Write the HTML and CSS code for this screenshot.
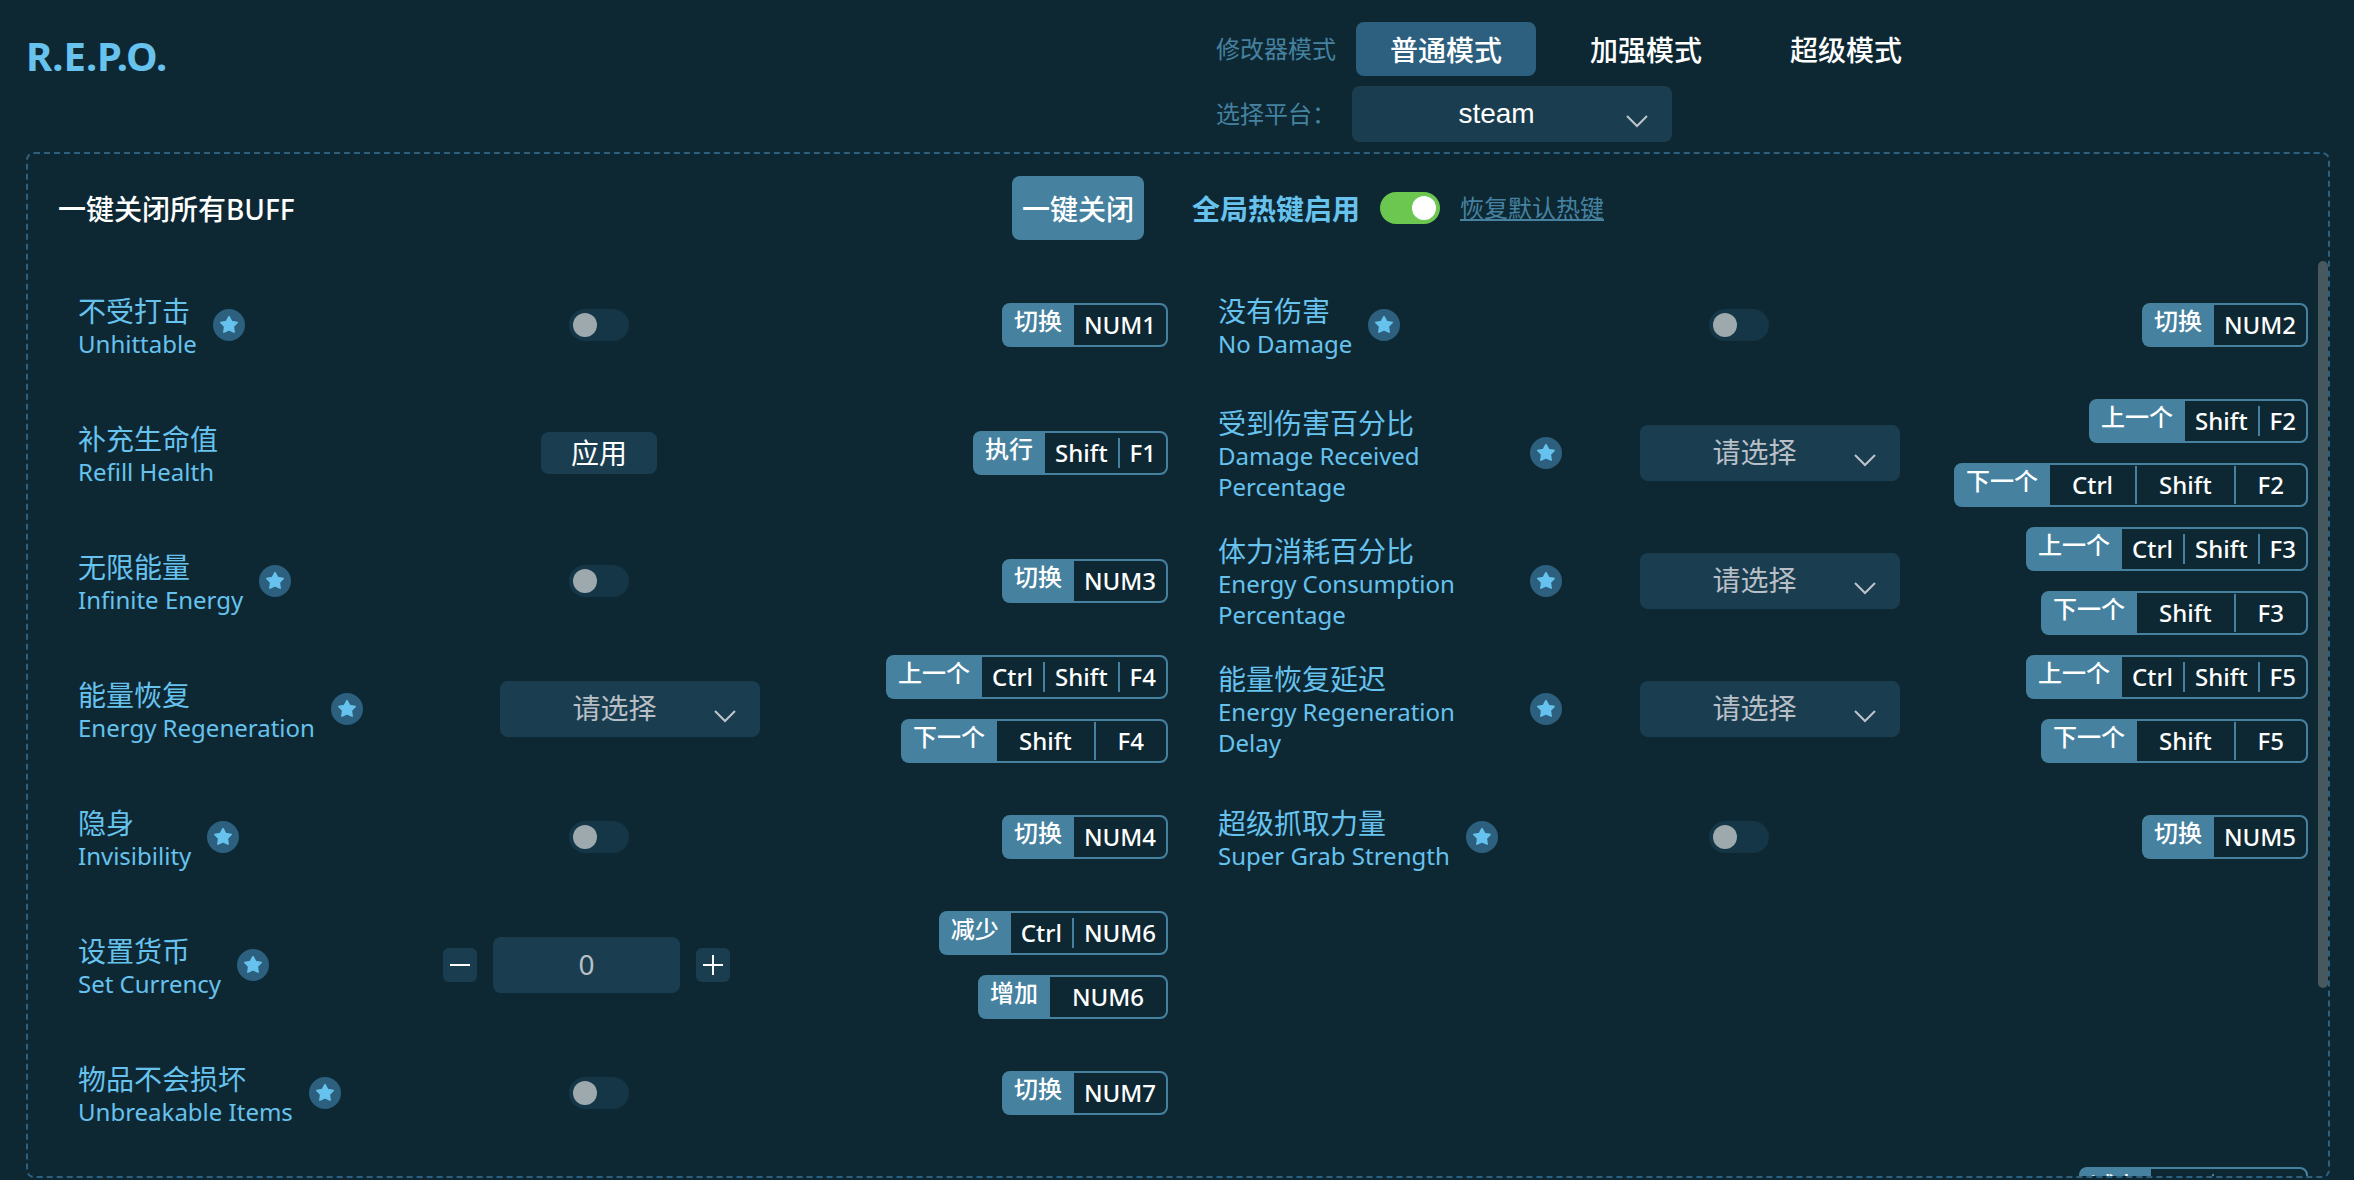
FILE: index.html
```html
<!DOCTYPE html>
<html lang="zh-CN">
<head>
<meta charset="utf-8">
<meta name="viewport" content="width=device-width, initial-scale=1">
<title>R.E.P.O.</title>
<link rel="stylesheet" href="styles.css">
</head>
<body>
<svg class="sprite" aria-hidden="true">
  <symbol id="star" viewBox="0 0 32 32">
    <path d="M16 7.6l2.7 5 5.5.9-3.9 4 .8 5.6-5.1-2.4-5.1 2.4.8-5.6-3.9-4 5.5-.9z" fill="currentColor" stroke="currentColor" stroke-width="1.6" stroke-linejoin="round"/>
  </symbol>
</svg>

<header class="page-header">
  <h1 class="game-title">R.E.P.O.</h1>
  <div class="settings">
    <div class="mode-row">
      <span class="field-label">修改器模式</span>
      <button class="mode mode-active" type="button">普通模式</button>
      <button class="mode" type="button">加强模式</button>
      <button class="mode" type="button">超级模式</button>
    </div>
    <div class="platform-row">
      <label class="field-label" for="platform">选择平台：</label>
      <select class="select select-platform" id="platform"><option>steam</option></select>
    </div>
  </div>
</header>

<main class="panel">
  <div class="toolbar">
    <div class="toolbar-left">
      <span class="toolbar-text">一键关闭所有BUFF</span>
      <button class="close-all" type="button">一键关闭</button>
    </div>
    <div class="toolbar-right">
      <label class="hotkey-label" for="hotkeys">全局热键启用</label>
      <input class="switch" id="hotkeys" type="checkbox" checked>
      <a class="reset-link" href="#">恢复默认热键</a>
    </div>
  </div>

  <div class="scroll-area">
    <div class="options">
      <section class="option">
        <label class="name" for="o1"><span class="text"><span class="zh">不受打击</span><span class="en">Unhittable</span></span><span class="badge"><svg><use href="#star"/></svg></span></label>
        <div class="control"><input class="switch" id="o1" type="checkbox"></div>
        <div class="hotkeys"><div class="hotkey"><span class="action">切换</span><kbd>NUM1</kbd></div></div>
      </section>
      <section class="option">
        <label class="name" for="o2"><span class="text"><span class="zh">没有伤害</span><span class="en">No Damage</span></span><span class="badge"><svg><use href="#star"/></svg></span></label>
        <div class="control"><input class="switch" id="o2" type="checkbox"></div>
        <div class="hotkeys"><div class="hotkey"><span class="action">切换</span><kbd>NUM2</kbd></div></div>
      </section>

      <section class="option">
        <label class="name" for="o3"><span class="text"><span class="zh">补充生命值</span><span class="en">Refill Health</span></span></label>
        <div class="control"><button class="apply" id="o3" type="button">应用</button></div>
        <div class="hotkeys"><div class="hotkey"><span class="action">执行</span><kbd>Shift</kbd><kbd>F1</kbd></div></div>
      </section>
      <section class="option">
        <label class="name" for="o4"><span class="text"><span class="zh">受到伤害百分比</span><span class="en">Damage Received Percentage</span></span><span class="badge"><svg><use href="#star"/></svg></span></label>
        <div class="control control-select"><select class="select" id="o4"><option>请选择</option></select></div>
        <div class="hotkeys">
          <div class="hotkey"><span class="action">上一个</span><kbd>Shift</kbd><kbd>F2</kbd></div>
          <div class="hotkey hotkey-wide"><span class="action">下一个</span><kbd>Ctrl</kbd><kbd>Shift</kbd><kbd>F2</kbd></div>
        </div>
      </section>

      <section class="option">
        <label class="name" for="o5"><span class="text"><span class="zh">无限能量</span><span class="en">Infinite Energy</span></span><span class="badge"><svg><use href="#star"/></svg></span></label>
        <div class="control"><input class="switch" id="o5" type="checkbox"></div>
        <div class="hotkeys"><div class="hotkey"><span class="action">切换</span><kbd>NUM3</kbd></div></div>
      </section>
      <section class="option">
        <label class="name" for="o6"><span class="text"><span class="zh">体力消耗百分比</span><span class="en">Energy Consumption Percentage</span></span><span class="badge"><svg><use href="#star"/></svg></span></label>
        <div class="control control-select"><select class="select" id="o6"><option>请选择</option></select></div>
        <div class="hotkeys">
          <div class="hotkey"><span class="action">上一个</span><kbd>Ctrl</kbd><kbd>Shift</kbd><kbd>F3</kbd></div>
          <div class="hotkey hotkey-wide"><span class="action">下一个</span><kbd>Shift</kbd><kbd>F3</kbd></div>
        </div>
      </section>

      <section class="option">
        <label class="name" for="o7"><span class="text"><span class="zh">能量恢复</span><span class="en">Energy Regeneration</span></span><span class="badge"><svg><use href="#star"/></svg></span></label>
        <div class="control control-select"><select class="select" id="o7"><option>请选择</option></select></div>
        <div class="hotkeys">
          <div class="hotkey"><span class="action">上一个</span><kbd>Ctrl</kbd><kbd>Shift</kbd><kbd>F4</kbd></div>
          <div class="hotkey hotkey-wide"><span class="action">下一个</span><kbd>Shift</kbd><kbd>F4</kbd></div>
        </div>
      </section>
      <section class="option">
        <label class="name" for="o8"><span class="text"><span class="zh">能量恢复延迟</span><span class="en">Energy Regeneration Delay</span></span><span class="badge"><svg><use href="#star"/></svg></span></label>
        <div class="control control-select"><select class="select" id="o8"><option>请选择</option></select></div>
        <div class="hotkeys">
          <div class="hotkey"><span class="action">上一个</span><kbd>Ctrl</kbd><kbd>Shift</kbd><kbd>F5</kbd></div>
          <div class="hotkey hotkey-wide"><span class="action">下一个</span><kbd>Shift</kbd><kbd>F5</kbd></div>
        </div>
      </section>

      <section class="option">
        <label class="name" for="o9"><span class="text"><span class="zh">隐身</span><span class="en">Invisibility</span></span><span class="badge"><svg><use href="#star"/></svg></span></label>
        <div class="control"><input class="switch" id="o9" type="checkbox"></div>
        <div class="hotkeys"><div class="hotkey"><span class="action">切换</span><kbd>NUM4</kbd></div></div>
      </section>
      <section class="option">
        <label class="name" for="o10"><span class="text"><span class="zh">超级抓取力量</span><span class="en">Super Grab Strength</span></span><span class="badge"><svg><use href="#star"/></svg></span></label>
        <div class="control"><input class="switch" id="o10" type="checkbox"></div>
        <div class="hotkeys"><div class="hotkey"><span class="action">切换</span><kbd>NUM5</kbd></div></div>
      </section>

      <section class="option">
        <label class="name" for="o11"><span class="text"><span class="zh">设置货币</span><span class="en">Set Currency</span></span><span class="badge"><svg><use href="#star"/></svg></span></label>
        <div class="control control-stepper">
          <button class="step" type="button" aria-label="减少"><svg viewBox="0 0 34 34"><path d="M7 17h20"/></svg></button>
          <input class="amount" id="o11" type="text" value="0">
          <button class="step" type="button" aria-label="增加"><svg viewBox="0 0 34 34"><path d="M7 17h20M17 7v20"/></svg></button>
        </div>
        <div class="hotkeys">
          <div class="hotkey"><span class="action">减少</span><kbd>Ctrl</kbd><kbd>NUM6</kbd></div>
          <div class="hotkey hotkey-wide"><span class="action">增加</span><kbd>NUM6</kbd></div>
        </div>
      </section>
      <div class="option"></div>

      <section class="option">
        <label class="name" for="o12"><span class="text"><span class="zh">物品不会损坏</span><span class="en">Unbreakable Items</span></span><span class="badge"><svg><use href="#star"/></svg></span></label>
        <div class="control"><input class="switch" id="o12" type="checkbox"></div>
        <div class="hotkeys"><div class="hotkey"><span class="action">切换</span><kbd>NUM7</kbd></div></div>
      </section>
      <div class="option"></div>

      <div class="option"></div>
      <section class="option">
        <div class="name"></div>
        <div class="control"></div>
        <div class="hotkeys">
          <div class="hotkey"><span class="action">减少</span><kbd>Ctrl</kbd><kbd>NUM8</kbd></div>
          <div class="hotkey hotkey-wide"><span class="action">增加</span><kbd>NUM8</kbd></div>
        </div>
      </section>
      <div class="option"></div>
    </div>
    <div class="scroll-thumb"></div>
  </div>
</main>
</body>
</html>
```
FILE: styles.css
```css
:root {
  --bg: #0d2833;
  --field: #1a3e50;
  --active: #2c607e;
  --accent: #4682a0;
  --sky: #67c2ee;
}

* {
  box-sizing: border-box;
}

body {
  margin: 0;
  height: 100vh;
  display: flex;
  flex-direction: column;
  padding: 0 24px 2px 26px;
  background: var(--bg);
  color: #fff;
  font-family: "Noto Sans", "Noto Sans CJK SC", sans-serif;
  font-size: 24px;
}

button,
select,
input {
  margin: 0;
  border: 0;
  font: inherit;
  color: inherit;
}

button {
  padding: 0;
}

.sprite {
  position: absolute;
  width: 0;
  height: 0;
}

/* Header */

.page-header {
  display: grid;
  grid-template-columns: 1fr 1fr;
  padding: 22px 0 10px;
}

.game-title {
  margin: 0;
  font-size: 40px;
  line-height: 68px;
  font-weight: 700;
  color: var(--sky);
}

.settings {
  display: flex;
  flex-direction: column;
  gap: 10px;
  padding-left: 38px;
}

.mode-row,
.platform-row {
  display: flex;
  align-items: center;
  gap: 20px;
}

.platform-row {
  gap: 16px;
}

.field-label {
  width: 120px;
  padding-bottom: 3px;
  white-space: nowrap;
  color: var(--accent);
}

.mode {
  width: 180px;
  height: 54px;
  border-radius: 8px;
  background: none;
  font-size: 28px;
  font-weight: 500;
}

.mode-active {
  background: var(--active);
}

.select {
  width: 260px;
  height: 56px;
  padding: 0 31px 2px 0;
  border-radius: 8px;
  appearance: none;
  background: var(--field) url("data:image/svg+xml,%3Csvg xmlns='http://www.w3.org/2000/svg' width='24' height='16' fill='none' stroke='%23c0c4cc' stroke-width='2'%3E%3Cpath d='M2 2l10 10 10-10'/%3E%3C/svg%3E") no-repeat right 23px top 28px;
  color: #b9bfc6;
  font-size: 28px;
  text-align: center;
  text-align-last: center;
}

.select-platform {
  width: 320px;
  color: #fff;
  font-family: "Liberation Sans", Arial, sans-serif;
}

/* Panel */

.panel {
  flex: 1;
  min-height: 0;
  display: flex;
  flex-direction: column;
  border: 2px dashed var(--active);
  border-radius: 8px;
}

.toolbar {
  display: grid;
  grid-template-columns: 1fr 1fr;
  padding: 22px 0 21px;
}

.toolbar-left,
.toolbar-right {
  display: flex;
  align-items: center;
  font-size: 28px;
}

.toolbar-left {
  justify-content: space-between;
  padding: 0 34px 0 30px;
  font-weight: 500;
}

.toolbar-right {
  gap: 20px;
  padding-left: 14px;
}

.close-all {
  width: 132px;
  height: 64px;
  border-radius: 8px;
  background: var(--accent);
  font-size: 28px;
}

.hotkey-label {
  color: var(--sky);
  font-weight: 700;
}

.reset-link {
  padding-bottom: 3px;
  color: var(--accent);
  font-size: 24px;
}

.switch {
  width: 60px;
  height: 32px;
  padding: 4px;
  border-radius: 16px;
  appearance: none;
  display: flex;
  background: #153647;
}

.switch::before {
  content: "";
  width: 24px;
  height: 24px;
  border-radius: 50%;
  background: #9ea9ae;
}

.switch:checked {
  justify-content: flex-end;
  background: #6cc750;
}

.switch:checked::before {
  background: #fff;
}

/* Options */

.scroll-area {
  position: relative;
  flex: 1;
  min-height: 0;
  overflow: hidden;
}

.scroll-thumb {
  position: absolute;
  top: 0;
  right: 0;
  width: 10px;
  height: 79.4%;
  border-radius: 5px;
  background: #47595f;
}

.options {
  display: grid;
  grid-template-columns: 1fr 1fr;
  grid-auto-rows: 128px;
  padding: 0 10px;
}

.option {
  display: grid;
  grid-template-columns: minmax(0, 360fr) 322px minmax(0, 408fr);
  align-items: center;
  padding: 0 10px 0 40px;
}

.name {
  display: flex;
  align-items: center;
  gap: 16px;
  color: var(--sky);
}

.text {
  max-width: 296px;
  padding-top: 2px;
}

.zh,
.en {
  display: block;
}

.zh {
  font-size: 28px;
  line-height: 34px;
}

.en {
  font-size: 24px;
  line-height: 31px;
}

.badge {
  flex: none;
  width: 32px;
  height: 32px;
  border-radius: 50%;
  background: var(--active);
}

.badge svg,
.step svg {
  display: block;
  width: 100%;
  height: 100%;
}

.control {
  display: flex;
  align-items: center;
  justify-content: center;
}

.control-select {
  justify-content: flex-end;
}

.control-stepper {
  justify-content: flex-start;
  gap: 16px;
  padding-left: 5px;
}

.apply {
  width: 116px;
  height: 42px;
  border-radius: 8px;
  background: var(--field);
  font-size: 28px;
  line-height: 40px;
}

.step {
  width: 34px;
  height: 34px;
  border-radius: 6px;
  background: var(--field);
}

.step path {
  fill: none;
  stroke: #fff;
  stroke-width: 2;
}

.amount {
  width: 187px;
  height: 56px;
  padding: 0 0 2px;
  border-radius: 8px;
  background: var(--field);
  color: #b9bfc6;
  font-size: 28px;
  text-align: center;
}

.hotkeys {
  display: flex;
  flex-direction: column;
  align-items: flex-end;
  gap: 20px;
  font-weight: 500;
}

.hotkey {
  display: flex;
  align-items: center;
  height: 44px;
  border: 2px solid var(--accent);
  border-radius: 8px;
  white-space: nowrap;
}

.action {
  height: 40px;
  padding: 0 12px 0 10px;
  background: var(--accent);
  line-height: 32px;
}

kbd {
  padding: 0 10px;
  font-family: inherit;
  line-height: 30px;
}

kbd + kbd {
  border-left: 2px solid var(--accent);
}

.hotkey-wide kbd {
  padding: 0 22px;
  line-height: 38px;
}
```
